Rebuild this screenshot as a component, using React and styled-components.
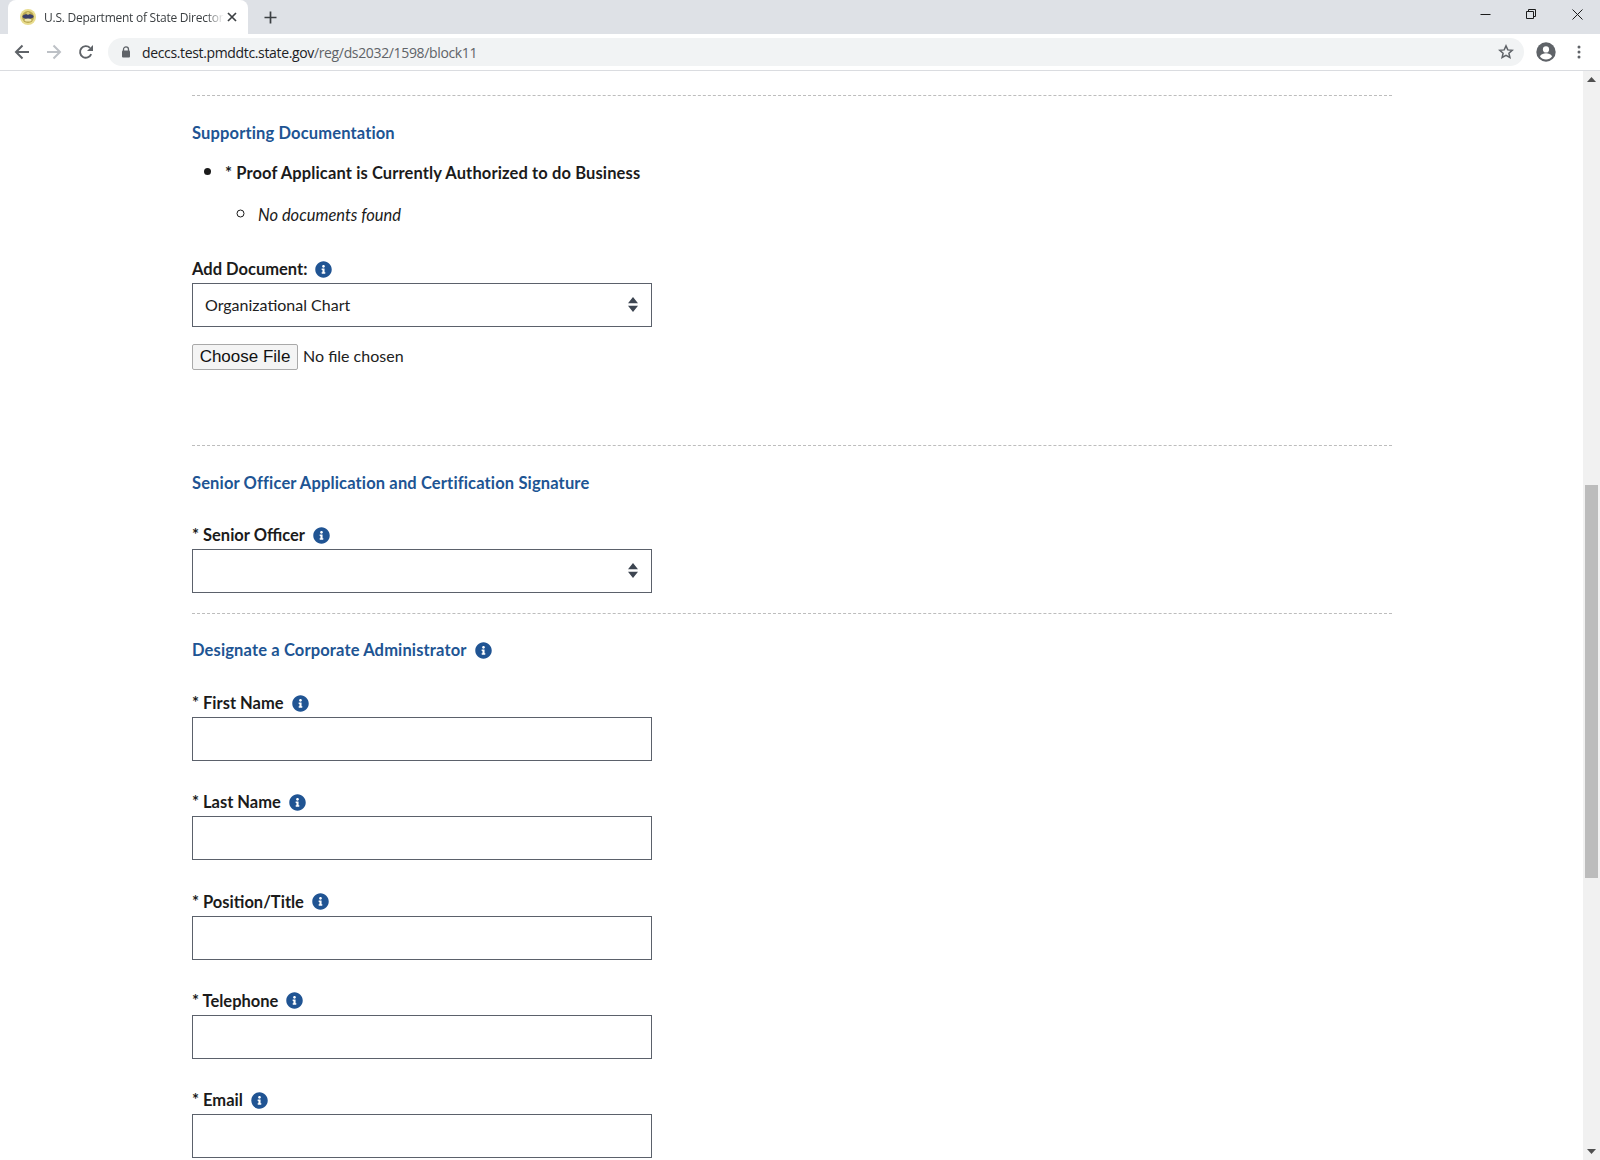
import React from "react";
import styled, { createGlobalStyle } from "styled-components";
import { FaInfoCircle } from "react-icons/fa";

const GlobalStyle = createGlobalStyle`
  html, body {
    margin: 0;
    padding: 0;
    height: 100%;
    overflow: hidden;
    background: #fff;
  }
  * {
    box-sizing: border-box;
  }
`;

const Janela = styled.div`
  display: flex;
  flex-direction: column;
  width: 1600px;
  height: 1160px;
  overflow: hidden;
  font-family: "Lato", "Liberation Sans", sans-serif;
  color: #1b1b1b;
`;

const TabStrip = styled.div`
  display: flex;
  align-items: flex-end;
  height: 34px;
  flex-shrink: 0;
  padding-left: 8px;
  background: #dee1e6;
`;

const Tab = styled.div`
  display: flex;
  align-items: center;
  width: 240px;
  height: 34px;
  padding: 0 11px 0 12px;
  background: #fff;
  border-radius: 8px 8px 0 0;
`;

const TabTitle = styled.span`
  flex: 1;
  margin-left: 8px;
  margin-right: 3px;
  overflow: hidden;
  white-space: nowrap;
  font-family: "Open Sans", sans-serif;
  font-size: 12px;
  letter-spacing: -0.25px;
  color: #3c4043;
  mask-image: linear-gradient(to right, #000 90%, transparent 100%);
`;

const NovaAba = styled.div`
  display: flex;
  align-items: center;
  justify-content: center;
  width: 28px;
  height: 28px;
  margin-left: 8px;
  margin-bottom: 3px;
`;

const ControlesJanela = styled.div`
  display: flex;
  margin-left: auto;
  align-self: flex-start;
`;

const BotaoJanela = styled.div`
  display: flex;
  align-items: center;
  justify-content: center;
  width: 46px;
  height: 28px;
`;

const Toolbar = styled.div`
  display: flex;
  align-items: center;
  height: 37px;
  flex-shrink: 0;
  padding: 0 0 0 6px;
  background: #fff;
  border-bottom: 1px solid #dadce0;
`;

const BotaoNav = styled.div`
  display: flex;
  align-items: center;
  justify-content: center;
  width: ${(p) => p.$largura || 32}px;
  height: 32px;
`;

const BarraEndereco = styled.div`
  display: flex;
  align-items: center;
  width: 1416px;
  height: 28px;
  margin-left: 6px;
  padding: 0 10px 0 13px;
  background: #f1f3f4;
  border-radius: 14px;
`;

const Url = styled.span`
  margin-left: 11px;
  font-family: "Open Sans", sans-serif;
  font-size: 14px;
  letter-spacing: -0.35px;
  color: #202124;

  span {
    color: #5f6368;
  }
`;

const Estrela = styled.div`
  display: flex;
  margin-left: auto;
`;

const AcoesToolbar = styled.div`
  display: flex;
  align-items: center;
  margin-left: 6px;
`;

const Corpo = styled.div`
  display: flex;
  flex: 1;
  min-height: 0;
`;

const Pagina = styled.main`
  flex: 1;
  min-width: 0;
  padding: 24px 191px 0 192px;
  overflow: hidden;
`;

const Secao = styled.section`
  border-top: 1px dashed #bdbdbd;
  height: ${(p) => p.$altura}px;
  padding-top: ${(p) => p.$topo || 25}px;
`;

const Titulo = styled.h2`
  display: flex;
  align-items: center;
  gap: 8px;
  margin: 0;
  height: 22px;
  font-size: 16.5px;
  font-weight: 700;
  letter-spacing: 0.14px;
  line-height: 22px;
  color: #205493;
`;

const ListaDocs = styled.ul`
  margin: 16px 0 0;
  padding: 0 0 0 33px;
  font-size: 16.5px;
  font-weight: 700;
  letter-spacing: 0.12px;
  line-height: 22px;

  li::marker {
    font-size: 21px;
  }

  ul {
    margin: 18px 0 0;
    padding-left: 33px;
    list-style: circle;
    font-weight: 400;
    font-style: italic;
    letter-spacing: 0;
  }
`;

const Rotulo = styled.label`
  display: flex;
  align-items: center;
  gap: 8px;
  height: 20px;
  margin-top: ${(p) => p.$topo}px;
  margin-bottom: 4px;
  font-size: 16.5px;
  font-weight: 700;
  line-height: 20px;
`;

const Info = styled(FaInfoCircle)`
  width: 17px;
  height: 17px;
  color: #205493;
`;

const CaixaSelect = styled.div`
  position: relative;
  width: 460px;
  height: 44px;
`;

const Select = styled.select`
  appearance: none;
  display: block;
  width: 100%;
  height: 100%;
  padding: 0 40px 2px 12px;
  border: 1px solid #5b616b;
  border-radius: 0;
  background: #fff;
  font-family: inherit;
  font-size: 16px;
  color: #212121;
`;

const SetasSelect = styled.svg`
  position: absolute;
  top: 14px;
  right: 14px;
  width: 10px;
  height: 15px;
  pointer-events: none;
`;

const Arquivo = styled.input`
  display: block;
  margin-top: 17px;
  height: 26px;
  font-family: inherit;
  font-size: 16px;
  color: #212121;

  &::file-selector-button {
    width: 106px;
    height: 26px;
    margin-right: 5px;
    padding: 0;
    border: 1px solid #a9a9a9;
    border-radius: 2px;
    background: #f4f4f4;
    font-family: "Liberation Sans", sans-serif;
    font-size: 17px;
    color: #111;
  }
`;

const Campo = styled.input`
  display: block;
  width: 460px;
  height: 44px;
  padding: 0 12px;
  border: 1px solid #5b616b;
  border-radius: 0;
  background: #fff;
`;

const GrupoCampo = styled.div`
  height: 99.25px;
  padding-top: 15px;
`;

const Scrollbar = styled.div`
  display: flex;
  flex-direction: column;
  align-items: center;
  width: 17px;
  flex-shrink: 0;
  background: #f1f1f1;
`;

const SetaScroll = styled.svg`
  width: 9px;
  height: 5px;
  margin: ${(p) => p.$margem};
`;

const TrilhoScroll = styled.div`
  flex: 1;
  width: 100%;
  padding: 0 2px;
  padding-top: ${(p) => p.$topo}px;
`;

const PolegarScroll = styled.div`
  width: 13px;
  height: 393px;
  background: #bcbcbc;
`;

const Favicon = () => (
  <svg width="16" height="16" viewBox="0 0 16 16">
    <circle cx="8" cy="8" r="8" fill="#e8dc8e" />
    <circle cx="8" cy="8" r="6" fill="#b9a64f" />
    <ellipse cx="8" cy="7.5" rx="5.5" ry="2.6" fill="#3a3f6b" />
    <ellipse cx="8" cy="11" rx="3.5" ry="1.6" fill="#f0e7b0" />
    <circle cx="8" cy="4.2" r="1.5" fill="#d9c978" />
  </svg>
);

const IconeFechar = () => (
  <svg width="10" height="10" viewBox="0 0 10 10">
    <path d="M1 1l8 8M9 1L1 9" stroke="#3c4043" strokeWidth="1.7" />
  </svg>
);

const IconeMais = () => (
  <svg width="13" height="13" viewBox="0 0 13 13">
    <path d="M6.5 0.5v12M0.5 6.5h12" stroke="#3c4043" strokeWidth="1.7" />
  </svg>
);

const IconeSeta = ({ cor, invertida }) => (
  <svg width="16" height="16" viewBox="0 0 16 16" style={invertida ? { transform: "scaleX(-1)" } : undefined}>
    <path d="M15 8H2.5M8.5 1.5L2 8l6.5 6.5" fill="none" stroke={cor} strokeWidth="2" />
  </svg>
);

const IconeRecarregar = () => (
  <svg width="16" height="16" viewBox="0 0 16 16">
    <path d="M13.2 10.2A5.8 5.8 0 1 1 12 3.9" fill="none" stroke="#5f6368" strokeWidth="1.9" />
    <path d="M15 1v6H9z" fill="#5f6368" />
  </svg>
);

const IconeCadeado = () => (
  <svg width="10" height="12" viewBox="0 0 10 12">
    <path d="M2.5 5V3.4a2.5 2.5 0 0 1 5 0V5" fill="none" stroke="#5f6368" strokeWidth="1.3" />
    <rect x="1" y="4.6" width="8" height="7" rx="1" fill="#5f6368" />
  </svg>
);

const IconeEstrela = () => (
  <svg width="16" height="16" viewBox="0 0 16 16">
    <path
      d="M8 1.9l1.8 4 4.4.4-3.3 2.9 1 4.3L8 11.3l-3.9 2.2 1-4.3-3.3-2.9 4.4-.4z"
      fill="none"
      stroke="#5f6368"
      strokeWidth="1.5"
    />
  </svg>
);

const IconeConta = () => (
  <svg width="20" height="20" viewBox="0 0 20 20">
    <circle cx="10" cy="10" r="9.7" fill="#5f6368" />
    <circle cx="10" cy="7.4" r="3.1" fill="#fff" />
    <path d="M3.9 14.2c1.4-2 3.8-2.9 6.1-2.9s4.700.9 6.100 2.900A7.800 7.800 0 0 1 10 17.500a7.800 7.800 0 0 1-6.100-3.300z" fill="#fff" />
  </svg>
);

const IconeMenu = () => (
  <svg width="4" height="14" viewBox="0 0 4 14">
    <circle cx="2" cy="2" r="1.5" fill="#5f6368" />
    <circle cx="2" cy="7" r="1.5" fill="#5f6368" />
    <circle cx="2" cy="12" r="1.5" fill="#5f6368" />
  </svg>
);

const SelectSetas = () => (
  <SetasSelect viewBox="0 0 10 15">
    <path d="M5 0l5 6.200H0zM5 15L0 8.800h10z" fill="#3d4551" />
  </SetasSelect>
);

const camposAdmin = ["* First Name", "* Last Name", "* Position/Title", "* Telephone", "* Email"];

export default function App() {
  return (
    <Janela>
      <GlobalStyle />
      <TabStrip>
        <Tab>
          <Favicon />
          <TabTitle>U.S. Department of State Directorate</TabTitle>
          <IconeFechar />
        </Tab>
        <NovaAba>
          <IconeMais />
        </NovaAba>
        <ControlesJanela>
          <BotaoJanela>
            <svg width="11" height="11" viewBox="0 0 11 11">
              <path d="M0.500 5.500h10" stroke="#1b1b1b" />
            </svg>
          </BotaoJanela>
          <BotaoJanela>
            <svg width="10" height="10" viewBox="0 0 10 10">
              <path d="M0.500 2.500h7v7h-7zM2.500 2.500v-2h7v7h-2" fill="none" stroke="#1b1b1b" />
            </svg>
          </BotaoJanela>
          <BotaoJanela>
            <svg width="11" height="11" viewBox="0 0 11 11">
              <path d="M0.500 0.500l10 10M10.500 0.500l-10 10" stroke="#1b1b1b" />
            </svg>
          </BotaoJanela>
        </ControlesJanela>
      </TabStrip>
      <Toolbar>
        <BotaoNav>
          <IconeSeta cor="#5f6368" />
        </BotaoNav>
        <BotaoNav>
          <IconeSeta cor="#bdc1c6" invertida />
        </BotaoNav>
        <BotaoNav>
          <IconeRecarregar />
        </BotaoNav>
        <BarraEndereco>
          <IconeCadeado />
          <Url>
            deccs.test.pmddtc.state.gov<span>/reg/ds2032/1598/block11</span>
          </Url>
          <Estrela>
            <IconeEstrela />
          </Estrela>
        </BarraEndereco>
        <AcoesToolbar>
          <BotaoNav>
            <IconeConta />
          </BotaoNav>
          <BotaoNav $largura={33}>
            <IconeMenu />
          </BotaoNav>
        </AcoesToolbar>
      </Toolbar>
      <Corpo>
        <Pagina>
          <Secao $altura={350} $topo={26}>
            <Titulo>Supporting Documentation</Titulo>
            <ListaDocs>
              <li>
                * Proof Applicant is Currently Authorized to do Business
                <ul>
                  <li>No documents found</li>
                </ul>
              </li>
            </ListaDocs>
            <Rotulo $topo={33}>
              Add Document: <Info />
            </Rotulo>
            <CaixaSelect>
              <Select defaultValue="org">
                <option value="org">Organizational Chart</option>
              </Select>
              <SelectSetas />
            </CaixaSelect>
            <Arquivo type="file" />
          </Secao>
          <Secao $altura={168} $topo={26}>
            <Titulo>Senior Officer Application and Certification Signature</Titulo>
            <Rotulo $topo={31}>
              * Senior Officer <Info />
            </Rotulo>
            <CaixaSelect>
              <Select defaultValue="">
                <option value=""></option>
              </Select>
              <SelectSetas />
            </CaixaSelect>
          </Secao>
          <Secao $altura={65}>
            <Titulo>
              Designate a Corporate Administrator <Info />
            </Titulo>
          </Secao>
          {camposAdmin.map((nome) => (
            <GrupoCampo key={nome}>
              <Rotulo $topo={0}>
                {nome} <Info />
              </Rotulo>
              <Campo type="text" />
            </GrupoCampo>
          ))}
        </Pagina>
        <Scrollbar>
          <SetaScroll $margem="6px 0 0" viewBox="0 0 9 5">
            <path d="M4.500 0L9 5H0z" fill="#505050" />
          </SetaScroll>
          <TrilhoScroll $topo={403}>
            <PolegarScroll />
          </TrilhoScroll>
          <SetaScroll $margem="0 0 6px" viewBox="0 0 9 5">
            <path d="M4.500 5L0 0h9z" fill="#505050" />
          </SetaScroll>
        </Scrollbar>
      </Corpo>
    </Janela>
  );
}
